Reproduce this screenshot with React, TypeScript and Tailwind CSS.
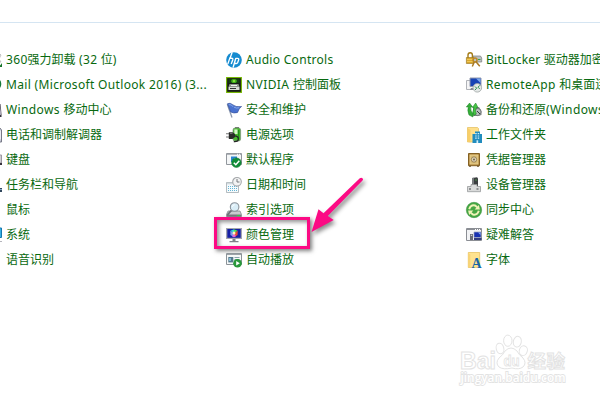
import React from 'react';

const Svg: React.FC<{ children: React.ReactNode }> = ({ children }) => (
  <svg viewBox="0 0 16 16" className="w-4 h-4 shrink-0 overflow-visible">
    {children}
  </svg>
);

/* Left column icons, only their right edge is on screen */
const Uninstall = () => (
  <Svg>
    <path d="M4 1h9l2 2-2 4 2 3H4z" fill="#e4e4e4" stroke="#c3c3c3" />
    <path d="M8 15q6 0 8-4v4z" fill="#17752c" />
  </Svg>
);

const Mail = () => (
  <Svg>
    <circle cx="8.5" cy="7" r="6.8" fill="#157a3a" />
    <path d="M3 4h8v7H3z" fill="#fff" />
  </Svg>
);

const Mobility = () => (
  <Svg>
    <path d="M2 12V2h12.5l1 10z" fill="#4e4a57" />
    <path d="M1 12h14.5v3H1z" fill="#35323d" />
    <path d="M14 5l1 5v3h-1z" fill="#a9a5b5" />
  </Svg>
);

const Phone = () => (
  <Svg>
    <path d="M3 1h11l1.5 2v12H3z" fill="#c5c7d4" stroke="#777987" />
    <path d="M13.5 5l1.5-2v10l-1.5-2z" fill="#ececf4" />
  </Svg>
);

const Keyboard = () => (
  <Svg>
    <path d="M1 3h14.5v8H1z" fill="#d0ced3" stroke="#9c98a0" />
    <path d="M1 11h15v2H1z" fill="#38333e" />
  </Svg>
);

const Taskbar = () => (
  <Svg>
    <path d="M1 11h15v4H1z" fill="#32475d" />
    <path d="M13 12h3v1h-3z" fill="#83a9cb" />
  </Svg>
);

const Mouse = () => (
  <Svg>
    <ellipse cx="7" cy="8" rx="4" ry="7" fill="#c7c9cc" />
  </Svg>
);

const System = () => (
  <Svg>
    <path d="M1 1h14.5v9.5H1z" fill="#38afe4" stroke="#1478ae" />
    <path d="M3 14.5h13" stroke="#b5b5bc" />
  </Svg>
);

const Speech = () => (
  <Svg>
    <rect x="4" y="1" width="6" height="12" rx="3" fill="#9ca0a6" />
  </Svg>
);

/* Middle column */
const Hp = () => (
  <Svg>
    <circle cx="8" cy="8" r="7.8" fill="#158bd0" />
    <path d="M6.2.2L4 6.2h1.5q1.8 0 1.2 1.8L5.2 12M4 5.6L1.8 12M9.8 6.3L7.1 15.5M9.6 6.3h2q1.6 0 1 1.8l-1 2.7q-.3.7-1.2.7H8.5" fill="none" stroke="#fff" strokeWidth="1.35" />
  </Svg>
);

const Nvidia = () => (
  <Svg>
    <rect x=".6" y=".6" width="14.8" height="14.8" fill="#171c17" stroke="#76b900" strokeWidth="1.1" />
    <path d="M2.5 2h11v4h-11z" fill="#143d12" />
    <ellipse cx="8" cy="4" rx="2.8" ry="2" fill="#42b31a" />
    <circle cx="8" cy="4" r="1" fill="#9dea44" />
    <path d="M3.5 7h9l1 3h-11z" fill="#8f958c" />
    <path d="M2.5 10h11v3h-11z" fill="#d8dcd5" />
    <path d="M4 11.5h6" stroke="#333" />
    <path d="M5 8.5h6" stroke="#efefef" />
  </Svg>
);

const Flag = () => (
  <Svg>
    <path d="M1.3 2.2L6 15.5" stroke="#8d99ae" strokeWidth="1.3" />
    <path d="M1.5 1.7Q4 .2 7 2.9q2.5 2.4 8.6 1.6-2.8 1.8-4 6-3.8 1.3-7-.6z" fill="#4a72cf" stroke="#2c4695" strokeWidth=".6" />
    <path d="M2.7 2.6q3-.5 4.3 2.2M8 5.2q2.5 1.4 5 .6" stroke="#83a7e8" fill="none" />
  </Svg>
);

const Power = () => (
  <Svg>
    <path d="M9 0h4v2H9z" fill="#777" />
    <rect x="7" y="1" width="7.6" height="13" rx="2" fill="#47b82f" stroke="#7d8d7d" strokeWidth=".7" />
    <path d="M8.3 2.4h3.2V7H8.3z" fill="#d5f5c8" />
    <path d="M12.7 3v9" stroke="#1b841a" />
    <path d="M0 6.7h3M0 10h3" stroke="#777" strokeWidth="1.1" />
    <path d="M2.8 5.3h3.7L9 7v3l-2.5 2H2.8z" fill="#292b29" />
    <path d="M8.5 8.8q4 .2 3.8 3.5 0 2.5-4.5 2.2" fill="none" stroke="#252525" strokeWidth="1.3" />
    <path d="M4 6.4h2.5" stroke="#999" strokeWidth=".7" />
  </Svg>
);

const Defaults = () => (
  <Svg>
    <path d="M.5 1.5h15v11H.5z" fill="#f4f6f7" stroke="#92979d" />
    <path d="M1 2.3h14" stroke="#a0a6ab" />
    <path d="M11 2.3h1M13 2.3h1" stroke="#fff" />
    <path d="M5 4.5h6V10H5z" fill="#2a87d2" />
    <path d="M6 9l3-3 1.5 2" stroke="#e5f3ff" fill="none" />
    <circle cx="10.4" cy="10.7" r="4.8" fill="#108c38" stroke="#087326" strokeWidth=".5" />
    <path d="M7.8 10.8l2 1.9 3.5-4" stroke="#fff" strokeWidth="1.5" fill="none" />
  </Svg>
);

const DateTime = () => (
  <Svg>
    <path d="M.5 5.5h12v10H.5z" fill="#f6fbfd" stroke="#a2abb0" strokeWidth=".8" />
    <path d="M1 6.6h11" stroke="#d2dade" strokeWidth="1.5" />
    <path d="M2 9.5h9M2 11.5h9M2 13.5h9" stroke="#65b5d5" strokeDasharray="1 1" />
    <circle cx="11" cy="4.8" r="4.3" fill="#f3f3f3" stroke="#a5a8ab" strokeWidth="1.1" />
    <path d="M11 2v3h2.5" stroke="#74787c" fill="none" />
  </Svg>
);

const Indexing = () => (
  <Svg>
    <path d="M2 9h12l1.5 3.5v2H.5v-2z" fill="#c9ccce" stroke="#787c80" strokeWidth=".7" />
    <path d="M1 12.5h14v2H1z" fill="#777c80" />
    <path d="M11 13.5h3" stroke="#37d748" />
    <path d="M5.7 8.2L1.3 13" stroke="#6d7278" strokeWidth="1.8" />
    <circle cx="8.6" cy="5" r="4.3" fill="#d9edf7" stroke="#899199" strokeWidth="1.1" />
    <path d="M6.3 4.8q.4-2 2.4-2" stroke="#fff" fill="none" />
  </Svg>
);

const ColorManagement = () => (
  <Svg>
    <path d="M0 1h16v11H0z" fill="#a4a5ae" />
    <path d="M1.3 2h13.4v8.8H1.3z" fill="#1720a5" />
    <path d="M4.3 3.7L8 2.3v4z" fill="#31d3d5" />
    <path d="M8 2.3l3.7 1.4L8 6.3z" fill="#50dd55" />
    <path d="M4.3 3.7L8 6.3v4L4.4 8z" fill="#7d9bf0" />
    <path d="M11.7 3.7L8 6.3v4L11.6 8z" fill="#ed4c31" />
    <path d="M8 6.3l-2 2.9 2 1.1 2-1.1z" fill="#e564dc" />
    <circle cx="8" cy="6" r="1.5" fill="#fff6bd" />
    <path d="M6.5 12h3v2h3v1.3h-9V14h3z" fill="#7f8189" />
  </Svg>
);

const AutoPlay = () => (
  <Svg>
    <path d="M.5 1.5h15v11H.5z" fill="#f6f8f8" stroke="#8c9398" />
    <path d="M1 2.4h14" stroke="#9ca2a8" strokeWidth="1.2" />
    <path d="M2.3 5h5v5.4h-5z" fill="#55788c" />
    <path d="M3 6h2v3H3z" fill="#85bbd3" />
    <path d="M8.5 5.5h5M8.5 7.5h5" stroke="#8aa0ad" />
    <circle cx="11.5" cy="11.3" r="4.3" fill="#28983b" />
    <path d="M10.2 9l3.7 2.3-3.7 2.3z" fill="#fff" />
  </Svg>
);

/* Right column */
const BitLocker = () => (
  <Svg>
    <path d="M7 4h7.5l1.2 2v4H7z" fill="#bdc0c1" stroke="#777b7c" strokeWidth=".7" />
    <path d="M12 7.5h2.5" stroke="#38a747" />
    <path d="M2 6V3q0-2.2 2.2-2.2T6.4 3v3" fill="none" stroke="#a47c18" strokeWidth="1.4" />
    <path d="M.4 5.5h7.2v6H.4z" fill="#d9a72b" stroke="#93701d" strokeWidth=".6" />
    <path d="M1 7.5h6M1 9.5h6" stroke="#f6d56d" strokeWidth=".7" />
    <circle cx="9" cy="8" r="2" fill="none" stroke="#bb8927" strokeWidth="1.5" />
    <path d="M9.8 9.5l4 4.8M8.3 10l-2 4.5" stroke="#aa7822" strokeWidth="1.5" />
  </Svg>
);

const RemoteApp = () => (
  <Svg>
    <path d="M.5 3.5h7v9h-7z" fill="#f5f5f6" stroke="#b0b3b8" />
    <path d="M4 1h11v8.5H4z" fill="#1844b5" stroke="#9299ad" />
    <path d="M10 1.5h4.5V6z" fill="#7aa7ec" />
    <path d="M5 11h4v2H4z" fill="#858894" />
    <circle cx="11.3" cy="10.8" r="4.3" fill="#e4e8e7" stroke="#9da3a2" strokeWidth=".8" />
    <path d="M9 9.5l1.7 1.7L9 13M13.7 8.4L12 10.2l1.7 1.7" stroke="#2c9250" fill="none" />
  </Svg>
);

const Backup = () => (
  <Svg>
    <path d="M7 5h6l2.5 4v4L12 14H7z" fill="#868b8c" />
    <circle cx="11.5" cy="10" r="3.6" fill="#b9bdbe" stroke="#64696b" strokeWidth=".8" />
    <path d="M11 9l3 3" stroke="#383d40" />
    <path d="M3 13Q1 8 2.4 5H.3L3.6 1l3 4H4.7q-.4 4 2.3 6v4z" fill="#35ae38" stroke="#197d25" strokeWidth=".5" />
    <path d="M8 13.5q-2-4 0-8H6.4L9.7 1 12 5.5h-1.5Q8.7 9 10.3 12z" fill="#46c444" stroke="#197d25" strokeWidth=".5" />
  </Svg>
);

const WorkFolders = () => (
  <Svg>
    <path d="M1.5.5h10l1 1V15h-11z" fill="#ffe08b" stroke="#e3bd5a" strokeWidth=".7" />
    <path d="M1.5 1l3 2v12.5l-3-1z" fill="#f8ce68" />
    <path d="M6.5 7H9V4.5h5V7h2v9H6.5z" fill="#218cbe" />
    <path d="M9.2 6.7h4M9.2 9h4M9.2 11.2h4" stroke="#d4f0fb" strokeWidth="1.2" strokeDasharray="1.5 1" />
    <path d="M10.5 13.3h1.7V16h-1.7z" fill="#d4f0fb" />
  </Svg>
);

const Credentials = () => (
  <Svg>
    <path d="M2.5 1.5h11v12.2h-11z" fill="#b28a40" stroke="#846023" />
    <path d="M4 3h8v9H4z" fill="#d9bd76" stroke="#f0d99b" strokeWidth=".6" />
    <circle cx="8" cy="7.5" r="2.7" fill="#ddd3b7" stroke="#8d7445" strokeWidth=".8" />
    <circle cx="8" cy="7.5" r=".9" fill="#68563a" />
    <path d="M3 14.2h2M11 14.2h2" stroke="#604723" />
  </Svg>
);

const Devices = () => (
  <Svg>
    <path d="M6 1l5-.7 1 1V9H6z" fill="#3b3e40" />
    <path d="M6 1l2-.3V8H6z" fill="#777b7d" />
    <path d="M9.5 3h1" stroke="#5edf56" />
    <path d="M5 7.5h6v2h3.5v5.2h-13V9.5H5z" fill="#d9dada" stroke="#8d8f90" strokeWidth=".7" />
    <path d="M3 12h2M10.5 12h2" stroke="#454749" strokeWidth="1.2" />
  </Svg>
);

const Sync = () => (
  <Svg>
    <circle cx="8" cy="8" r="7.7" fill="#47a744" stroke="#318c38" strokeWidth=".5" />
    <path d="M3.2 7.2Q4.8 2.5 9 3.5l2.3 1.7" fill="none" stroke="#f0f3b9" strokeWidth="2" />
    <path d="M8.7 7.4h5.2L12.8 3z" fill="#f0f3b9" />
    <path d="M12.8 8.8Q11.2 13.5 7 12.5l-2.3-1.7" fill="none" stroke="#f0f3b9" strokeWidth="2" />
    <path d="M7.3 8.6H2.1L3.2 13z" fill="#f0f3b9" />
  </Svg>
);

const Troubleshoot = () => (
  <Svg>
    <path d="M.5 1.5h15v12H.5z" fill="#f2f3f5" stroke="#8b8e94" />
    <path d="M1 2.5h14" stroke="#8b8e94" />
    <path d="M9 2.5h1M11 2.5h1M13 2.5h1" stroke="#fff" />
    <path d="M8 5h7v5.5H8z" fill="#1831b2" stroke="#9aa2ba" strokeWidth=".7" />
    <path d="M12 5.5h2.5V8z" fill="#8caef5" />
    <path d="M8 11h7.5v2H8z" fill="#343d7e" />
    <path d="M4 7h3v6H4z" fill="#686b76" />
    <path d="M4.8 8.3h1.4" stroke="#eee" />
  </Svg>
);

const Fonts = () => (
  <Svg>
    <path d="M2.3.5h11.4v15H2.3z" fill="#ffe38f" stroke="#e5bd56" strokeWidth=".7" />
    <path d="M2.3 1l2 1.5v13l-2-.7z" fill="#f8d477" />
    <text x="5.6" y="15.7" fontSize="14" fontWeight="700" fill="#1766a8" className="font-['Liberation_Serif',serif]">A</text>
  </Svg>
);

type Item = { label: string; icon: React.FC; spacing?: string; marked?: boolean };

const COLUMNS: Item[][] = [
  [
    { label: '360强力卸载 (32 位)', icon: Uninstall, spacing: 'tracking-[0.33px]' },
    { label: 'Mail (Microsoft Outlook 2016) (3...', icon: Mail, spacing: 'tracking-[0.33px]' },
    { label: 'Windows 移动中心', icon: Mobility, spacing: 'tracking-[0.38px]' },
    { label: '电话和调制解调器', icon: Phone },
    { label: '键盘', icon: Keyboard },
    { label: '任务栏和导航', icon: Taskbar },
    { label: '鼠标', icon: Mouse },
    { label: '系统', icon: System },
    { label: '语音识别', icon: Speech },
  ],
  [
    { label: 'Audio Controls', icon: Hp, spacing: 'tracking-[0.3px]' },
    { label: 'NVIDIA 控制面板', icon: Nvidia, spacing: 'tracking-[0.42px]' },
    { label: '安全和维护', icon: Flag },
    { label: '电源选项', icon: Power },
    { label: '默认程序', icon: Defaults },
    { label: '日期和时间', icon: DateTime },
    { label: '索引选项', icon: Indexing },
    { label: '颜色管理', icon: ColorManagement, marked: true },
    { label: '自动播放', icon: AutoPlay },
  ],
  [
    { label: 'BitLocker 驱动器加密', icon: BitLocker, spacing: 'tracking-[0.2px]' },
    { label: 'RemoteApp 和桌面连接', icon: RemoteApp, spacing: 'tracking-[0.38px]' },
    { label: '备份和还原(Windows 7)', icon: Backup, spacing: 'tracking-[0.4px]' },
    { label: '工作文件夹', icon: WorkFolders },
    { label: '凭据管理器', icon: Credentials },
    { label: '设备管理器', icon: Devices },
    { label: '同步中心', icon: Sync },
    { label: '疑难解答', icon: Troubleshoot },
    { label: '字体', icon: Fonts },
  ],
];

const PanelItem: React.FC<{ item: Item }> = ({ item }) => {
  const Icon = item.icon;
  // only the latin runs are tracked, the hanzi stay on their 12px grid
  const runs = item.label.split(/([\u4e00-\u9fff]+)/).filter(Boolean);
  return (
    <li className="relative flex items-center gap-1 h-[25px]">
      <Icon />
      <span className="text-xs leading-[25px] whitespace-pre text-[#08690f]">
        {runs.map((run, i) => (
          <span key={i} className={/[\u4e00-\u9fff]/.test(run) ? '' : item.spacing}>{run}</span>
        ))}
      </span>
      {item.marked && (
        <span className="absolute -left-3 -top-[5px] w-24 h-8 border-[3px] border-[#fc0a84] shadow-[2px_2px_4px_rgba(0,0,0,0.5),inset_2px_2px_4px_rgba(0,0,0,0.45)]" />
      )}
    </li>
  );
};

const Arrow = () => (
  <svg viewBox="0 0 70 70" className="absolute left-[305px] top-[172px] w-[70px] h-[70px] drop-shadow-[2px_3px_2px_rgba(0,0,0,0.45)]">
    <path d="M54.8 6.3q1.5-1.3 2.7 0t0 2.2L22.8 44l5.9 4L6.5 60l7-22.7 5 4z" fill="#fc0a84" />
  </svg>
);

const Watermark = () => (
  <svg viewBox="0 0 120 60" className="absolute left-[456px] top-[330px] w-[120px] h-[60px]">
    <g fill="#fff" stroke="#e3e3e3" strokeWidth="1">
      <g className="font-['Liberation_Sans','Noto_Sans_CJK_SC',sans-serif] font-bold">
        <text x="4" y="38.5" fontSize="24.5" textLength="36" lengthAdjust="spacingAndGlyphs">Bai</text>
        <text x="71.5" y="38" fontSize="18.5" textLength="37.5">经验</text>
      </g>
      <text x="4.5" y="51.5" fontSize="12.5" strokeWidth="1.8" textLength="105" lengthAdjust="spacingAndGlyphs" paintOrder="stroke" className="font-['Open_Sans','Noto_Sans',sans-serif] font-semibold">jingyan.baidu.com</text>
      <ellipse cx="44" cy="18.5" rx="3.8" ry="5.3" transform="rotate(-14 44 18.5)" />
      <ellipse cx="51.8" cy="10.7" rx="4.2" ry="5.6" />
      <ellipse cx="61.3" cy="11.7" rx="4" ry="5.4" transform="rotate(12 61.3 11.7)" />
      <ellipse cx="67.3" cy="20.7" rx="4" ry="5" transform="rotate(18 67.3 20.7)" />
      <path d="M49 21q6-6 12 0 2 4 6 7 4 5 0 9-4 3-11 1-9 2-13-1-4-4 0-9 4-3 6-7z" />
      <text x="47.5" y="36" fontSize="14" fontWeight="700" strokeWidth=".8" textLength="16" lengthAdjust="spacingAndGlyphs" className="font-['Liberation_Sans',sans-serif]">du</text>
    </g>
  </svg>
);

const App: React.FC = () => {
  return (
    <main className="relative w-[600px] h-[400px] overflow-hidden bg-white font-['Noto_Sans','Noto_Sans_CJK_SC',sans-serif]">
      <div className="h-[23px] border-b border-[#d5e5f2]" />
      <div className="grid grid-cols-[240px_240px_240px] w-[720px] -ml-[14px] pt-6">
        {COLUMNS.map((items, i) => (
          <ul key={i}>
            {items.map((item) => (
              <PanelItem key={item.label} item={item} />
            ))}
          </ul>
        ))}
      </div>
      <Arrow />
      <Watermark />
    </main>
  );
};

export default App;
